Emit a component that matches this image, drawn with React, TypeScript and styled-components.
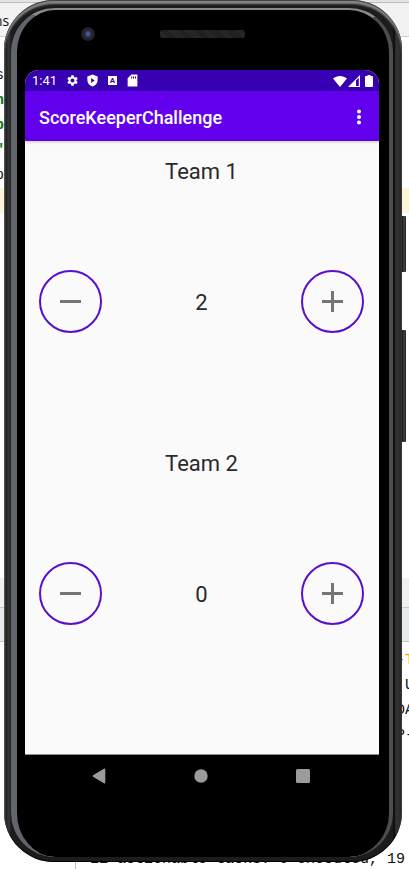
import React, { useState } from "react";
import styled, { createGlobalStyle } from "styled-components";

const GlobalStyle = createGlobalStyle`
  * { box-sizing: border-box; }
  body { margin: 0; background: #ffffff; font-family: Roboto, "Noto Sans", sans-serif; }
  button { font: inherit; padding: 0; border: 0; background: none; color: inherit; cursor: pointer; }
`;

const Stage = styled.main`
  position: relative;
  display: flex;
  min-height: 100vh;
  padding: 0 7px 7px 4px;
  overflow: hidden;
`;

/* Code editor window behind the emulator */
const Desktop = styled.div`
  position: absolute;
  inset: 0;
  display: flex;
  flex-direction: column;
  overflow: hidden;
  color: #111111;
`;

const EditorTabs = styled.div`
  height: 37px;
  flex: none;
  padding-top: 6px;
  border-bottom: 1px solid #cfcfcf;
  background: linear-gradient(#e4e4e4 0 2px, #bdbdbd 2px 3px, #f2f2f2 3px);
  font: 14px/30px "Open Sans", sans-serif;
`;

const TabName = styled.span`
  margin-left: -6px;
`;

const Editor = styled.div`
  flex: 1;
  padding-top: 26px;
`;

const CodeLine = styled.div<{ $color?: string; $active?: boolean }>`
  height: 25px;
  text-indent: -5px;
  font: 15px/25px "Liberation Mono", monospace;
  font-weight: ${(p) => (p.$color ? 700 : 400)};
  color: ${(p) => p.$color ?? "#111111"};
  background: ${(p) => (p.$active ? "#fcf5d9" : "transparent")};
`;

const PanelBar = styled.div<{ $height: number; $tone: string }>`
  flex: none;
  height: ${(p) => p.$height}px;
  background: ${(p) => p.$tone};
  border-bottom: 1px solid #c8c8c8;
`;

const Console = styled.div`
  flex: none;
  height: 227px;
  margin-left: 75px;
  padding-top: 6px;
  border-left: 1px solid #c0c0c0;
  font: 15px/25px "Liberation Mono", monospace;
  white-space: pre;
`;

const ConsoleLine = styled.div<{ $last?: boolean }>`
  height: 25px;
  padding-left: ${(p) => (p.$last ? 14 : 320)}px;
  margin-top: ${(p) => (p.$last ? 99 : 0)}px;
`;

const Amber = styled.span`
  color: #e3a21a;
`;

/* Phone body */
const Shell = styled.section`
  position: relative;
  flex: 1;
  display: flex;
  padding: 8px 9px 5px 7px;
  border-radius: 50px;
  box-shadow: inset 0 1px 0 #444444, inset 0 4px 2px #858585, inset 0 -1px 0 #050505;
  background: linear-gradient(
    90deg,
    #4a4a4a 0,
    #222222 2px,
    #363738 5px,
    #1c1c1c 7px,
    #1c1c1c calc(100% - 9px),
    #050505 calc(100% - 8px),
    #343434 calc(100% - 6px),
    #2b2b2c calc(100% - 2px),
    #161616 100%
  );
`;

const SideKey = styled.div<{ $top: number; $height: number }>`
  position: absolute;
  left: 100%;
  top: ${(p) => p.$top}px;
  width: 4px;
  height: ${(p) => p.$height}px;
  border-radius: 0 1px 1px 0;
  background: linear-gradient(90deg, #111111, #48484a 50%, #1d1d1d);
`;

const Glass = styled.div`
  flex: 1;
  min-width: 0;
  display: flex;
  flex-direction: column;
  padding: 0 10px 0 8px;
  overflow: hidden;
  border-style: solid;
  border-width: 2px 4px 0 6px;
  border-color: #8a8a8a #4d4d50 #222222 #62656c;
  border-radius: 44px;
  background: #000000;
`;

const Forehead = styled.div`
  flex: none;
  height: 60px;
  padding: 17px 0 0;
  display: grid;
  grid-template-columns: 1fr 86px 1fr;
  align-items: start;
`;

const Camera = styled.div`
  width: 14px;
  height: 14px;
  margin-left: 56px;
  border-radius: 50%;
  background: radial-gradient(circle, #4c5c8c 0 1px, #1c2544 4px, #24262b 5px, #1d1d1f 7px);
`;

const Speaker = styled.div`
  height: 8px;
  margin-top: 3px;
  margin-left: 1px;
  border-radius: 3px;
  background: repeating-linear-gradient(45deg, #2b2b2b 0 1px, #1b1b1b 1px 2px);
`;

const Screen = styled.div`
  flex: 1;
  display: flex;
  flex-direction: column;
  border-radius: 14px 14px 0 0;
  overflow: hidden;
  background: #fafafa;
`;

const StatusBar = styled.div`
  display: flex;
  align-items: center;
  justify-content: space-between;
  height: 21px;
  flex: none;
  padding: 0 4px 0 7px;
  background: #3700b3;
  color: #ffffff;
  font-size: 13px;
  line-height: 21px;
`;

const StatusGroup = styled.div<{ $gap: number }>`
  display: flex;
  align-items: center;
  gap: ${(p) => p.$gap}px;
`;

const Clock = styled.span`
  width: 27px;
`;

const AppBar = styled.header`
  display: flex;
  align-items: center;
  justify-content: space-between;
  height: 50px;
  flex: none;
  padding: 3px 10px 0 14px;
  background: #6200ee;
  color: #ffffff;
  box-shadow: 0 1px 3px #00000030;
`;

const AppTitle = styled.h1`
  margin: 0;
  font-size: 18px;
  font-weight: 500;
  line-height: 24px;
`;

const MenuButton = styled.button`
  display: grid;
  place-items: center;
  width: 20px;
  height: 24px;
  padding-bottom: 2px;
`;

const Board = styled.div`
  flex: 1;
  display: flex;
  flex-direction: column;
  padding-bottom: 29px;
`;

const Team = styled.section`
  flex: 1;
  padding: 16px 15px 0 14px;
  color: #2a2a2a;
`;

const TeamName = styled.h2`
  margin: 0 0 83px;
  font-size: 22px;
  font-weight: 400;
  line-height: 30px;
  text-align: center;
`;

const ScoreRow = styled.div`
  display: flex;
  align-items: center;
  justify-content: space-between;
`;

const RoundButton = styled.button`
  display: grid;
  place-items: center;
  width: 63px;
  height: 63px;
  border: 2px solid #5a0fcf;
  border-radius: 50%;
  color: #757575;
`;

const Score = styled.output`
  padding-top: 2px;
  font-size: 22px;
  line-height: 30px;
`;

const NavBar = styled.nav`
  display: flex;
  justify-content: space-between;
  flex: none;
  height: 103px;
  padding: 9px 64px 0 62px;
  border-top: 1px solid #8c8f8c;
  background: #000000;
  color: #9b9b9b;
`;

const NavButton = styled.button`
  display: grid;
  place-items: center;
  width: 24px;
  height: 24px;
`;

const paths = {
  gear:
    "M19.14 12.94c.04-.3.06-.61.06-.94s-.02-.64-.07-.94l2.03-1.58a.5.5 0 0 0 .12-.61l-1.92-3.32a.5.5 0 0 0-.59-.22l-2.39.96a7 7 0 0 0-1.62-.94l-.36-2.54a.5.5 0 0 0-.48-.41h-3.84a.5.5 0 0 0-.47.41l-.36 2.54c-.59.24-1.13.57-1.62.94l-2.39-.96a.5.5 0 0 0-.59.22L2.74 8.87a.5.5 0 0 0 .12.61l2.03 1.58a6 6 0 0 0 0 1.88l-2.03 1.58a.5.5 0 0 0-.12.61l1.92 3.32c.12.22.37.29.59.22l2.39-.96c.5.38 1.03.7 1.62.94l.36 2.54c.05.24.24.41.48.41h3.84c.24 0 .44-.17.47-.41l.36-2.54a7 7 0 0 0 1.62-.94l2.39.96c.22.08.47 0 .59-.22l1.92-3.32a.5.5 0 0 0-.12-.61zM12 15.6A3.6 3.6 0 1 1 12 8.4a3.6 3.6 0 0 1 0 7.2z",
  shield: "M12 1 2.5 4.5V11c0 6 4 10.500 9.500 12 5.500-1.500 9.500-6 9.500-12V4.500zM9.500 7.500l6.500 4.500-6.500 4.500z",
  card: "M10 1 3 8v15h18V1zM9.500 4.500h2v4h-2zM13 4.500h2v4h-2zM16.500 4.500h2v4h-2z",
};

const LetterBadge = styled.span`
  display: grid;
  place-items: center;
  width: 9px;
  height: 9px;
  margin: 0 2px;
  background: #ffffff;
  color: #3700b3;
  font-size: 8px;
  font-weight: 700;
  line-height: 9px;
`;

const Glyph = ({ d, size = 13 }: { d: string; size?: number }) => (
  <svg width={size} height={size} viewBox="0 0 24 24" fill="currentColor" fillRule="evenodd" aria-hidden="true">
    <path d={d} />
  </svg>
);

const StepIcon = ({ plus }: { plus?: boolean }) => (
  <svg width="21" height="21" viewBox="0 0 21 21" stroke="currentColor" strokeWidth="3" aria-hidden="true">
    <path d={plus ? "M0 10.500h21M10.500 0v21" : "M0 10.500h21"} />
  </svg>
);

function TeamPanel({ name, initial }: { name: string; initial: number }) {
  const [score, setScore] = useState(initial);
  return (
    <Team>
      <TeamName>{name}</TeamName>
      <ScoreRow>
        <RoundButton aria-label={`Decrease ${name} score`} onClick={() => setScore(score - 1)}>
          <StepIcon />
        </RoundButton>
        <Score>{score}</Score>
        <RoundButton aria-label={`Increase ${name} score`} onClick={() => setScore(score + 1)}>
          <StepIcon plus />
        </RoundButton>
      </ScoreRow>
    </Team>
  );
}

export default function App() {
  return (
    <Stage>
      <GlobalStyle />
      <Desktop aria-hidden="true">
        <EditorTabs>
          <TabName>ns</TabName>
        </EditorTabs>
        <Editor>
          <CodeLine>s</CodeLine>
          <CodeLine $color="#147a14">n</CodeLine>
          <CodeLine $color="#147a14">p</CodeLine>
          <CodeLine $color="#147a14">"</CodeLine>
          <CodeLine>p</CodeLine>
          <CodeLine $active />
        </Editor>
        <PanelBar $height={30} $tone="#f0f0f0" />
        <PanelBar $height={34} $tone="#e9eaeb" />
        <Console>
          <ConsoleLine>
            -<Amber>T</Amber>
          </ConsoleLine>
          <ConsoleLine>{" U"}</ConsoleLine>
          <ConsoleLine>DA</ConsoleLine>
          <ConsoleLine>P-</ConsoleLine>
          <ConsoleLine $last>11 actionable tasks: 6 executed, 19</ConsoleLine>
        </Console>
      </Desktop>
      <Shell>
        <SideKey $top={216} $height={56} />
        <SideKey $top={330} $height={112} />
        <Glass>
          <Forehead>
            <Camera />
            <Speaker />
          </Forehead>
          <Screen>
            <StatusBar>
              <StatusGroup $gap={7}>
                <Clock>1:41</Clock>
                <Glyph d={paths.gear} />
                <Glyph d={paths.shield} />
                <LetterBadge>A</LetterBadge>
                <Glyph d={paths.card} />
              </StatusGroup>
              <StatusGroup $gap={1}>
                <svg width="14" height="12" viewBox="0 0 14 12" fill="currentColor" aria-hidden="true">
                  <path d="M0 3.500C4 0 10 0 14 3.500L7 12z" />
                </svg>
                <svg width="12" height="12" viewBox="0 0 12 12" fill="currentColor" fillRule="evenodd" aria-hidden="true">
                  <path d="M0 12 12 0v12zM8 5.500V11h2.800V2.800z" />
                </svg>
                <svg width="14" height="12" viewBox="0 0 14 12" fill="currentColor" aria-hidden="true">
                  <path d="M6.500 0h3v1H11q1 0 1 1v9q0 1-1 1H5q-1 0-1-1V2q0-1 1-1h1.500z" />
                </svg>
              </StatusGroup>
            </StatusBar>
            <AppBar>
              <AppTitle>ScoreKeeperChallenge</AppTitle>
              <MenuButton aria-label="More options">
                <svg width="4" height="16" viewBox="0 0 4 16" fill="currentColor" aria-hidden="true">
                  <circle cx="2" cy="2.500" r="2" />
                  <circle cx="2" cy="8" r="2" />
                  <circle cx="2" cy="13.500" r="2" />
                </svg>
              </MenuButton>
            </AppBar>
            <Board>
              <TeamPanel name="Team 1" initial={2} />
              <TeamPanel name="Team 2" initial={0} />
            </Board>
            <NavBar>
              <NavButton aria-label="Back">
                <svg width="14" height="16" viewBox="0 0 14 16" fill="currentColor" aria-hidden="true">
                  <path d="M12 .8q1.300-.6 1.300.8v12.800q0 1.400-1.300.8L1 8.700Q0 8 1 7.300z" />
                </svg>
              </NavButton>
              <NavButton aria-label="Home">
                <svg width="14" height="14" viewBox="0 0 14 14" fill="currentColor" aria-hidden="true">
                  <circle cx="7" cy="7" r="6.700" />
                </svg>
              </NavButton>
              <NavButton aria-label="Recent apps">
                <svg width="14" height="14" viewBox="0 0 14 14" fill="currentColor" aria-hidden="true">
                  <rect width="14" height="14" rx="1.500" />
                </svg>
              </NavButton>
            </NavBar>
          </Screen>
        </Glass>
      </Shell>
    </Stage>
  );
}
